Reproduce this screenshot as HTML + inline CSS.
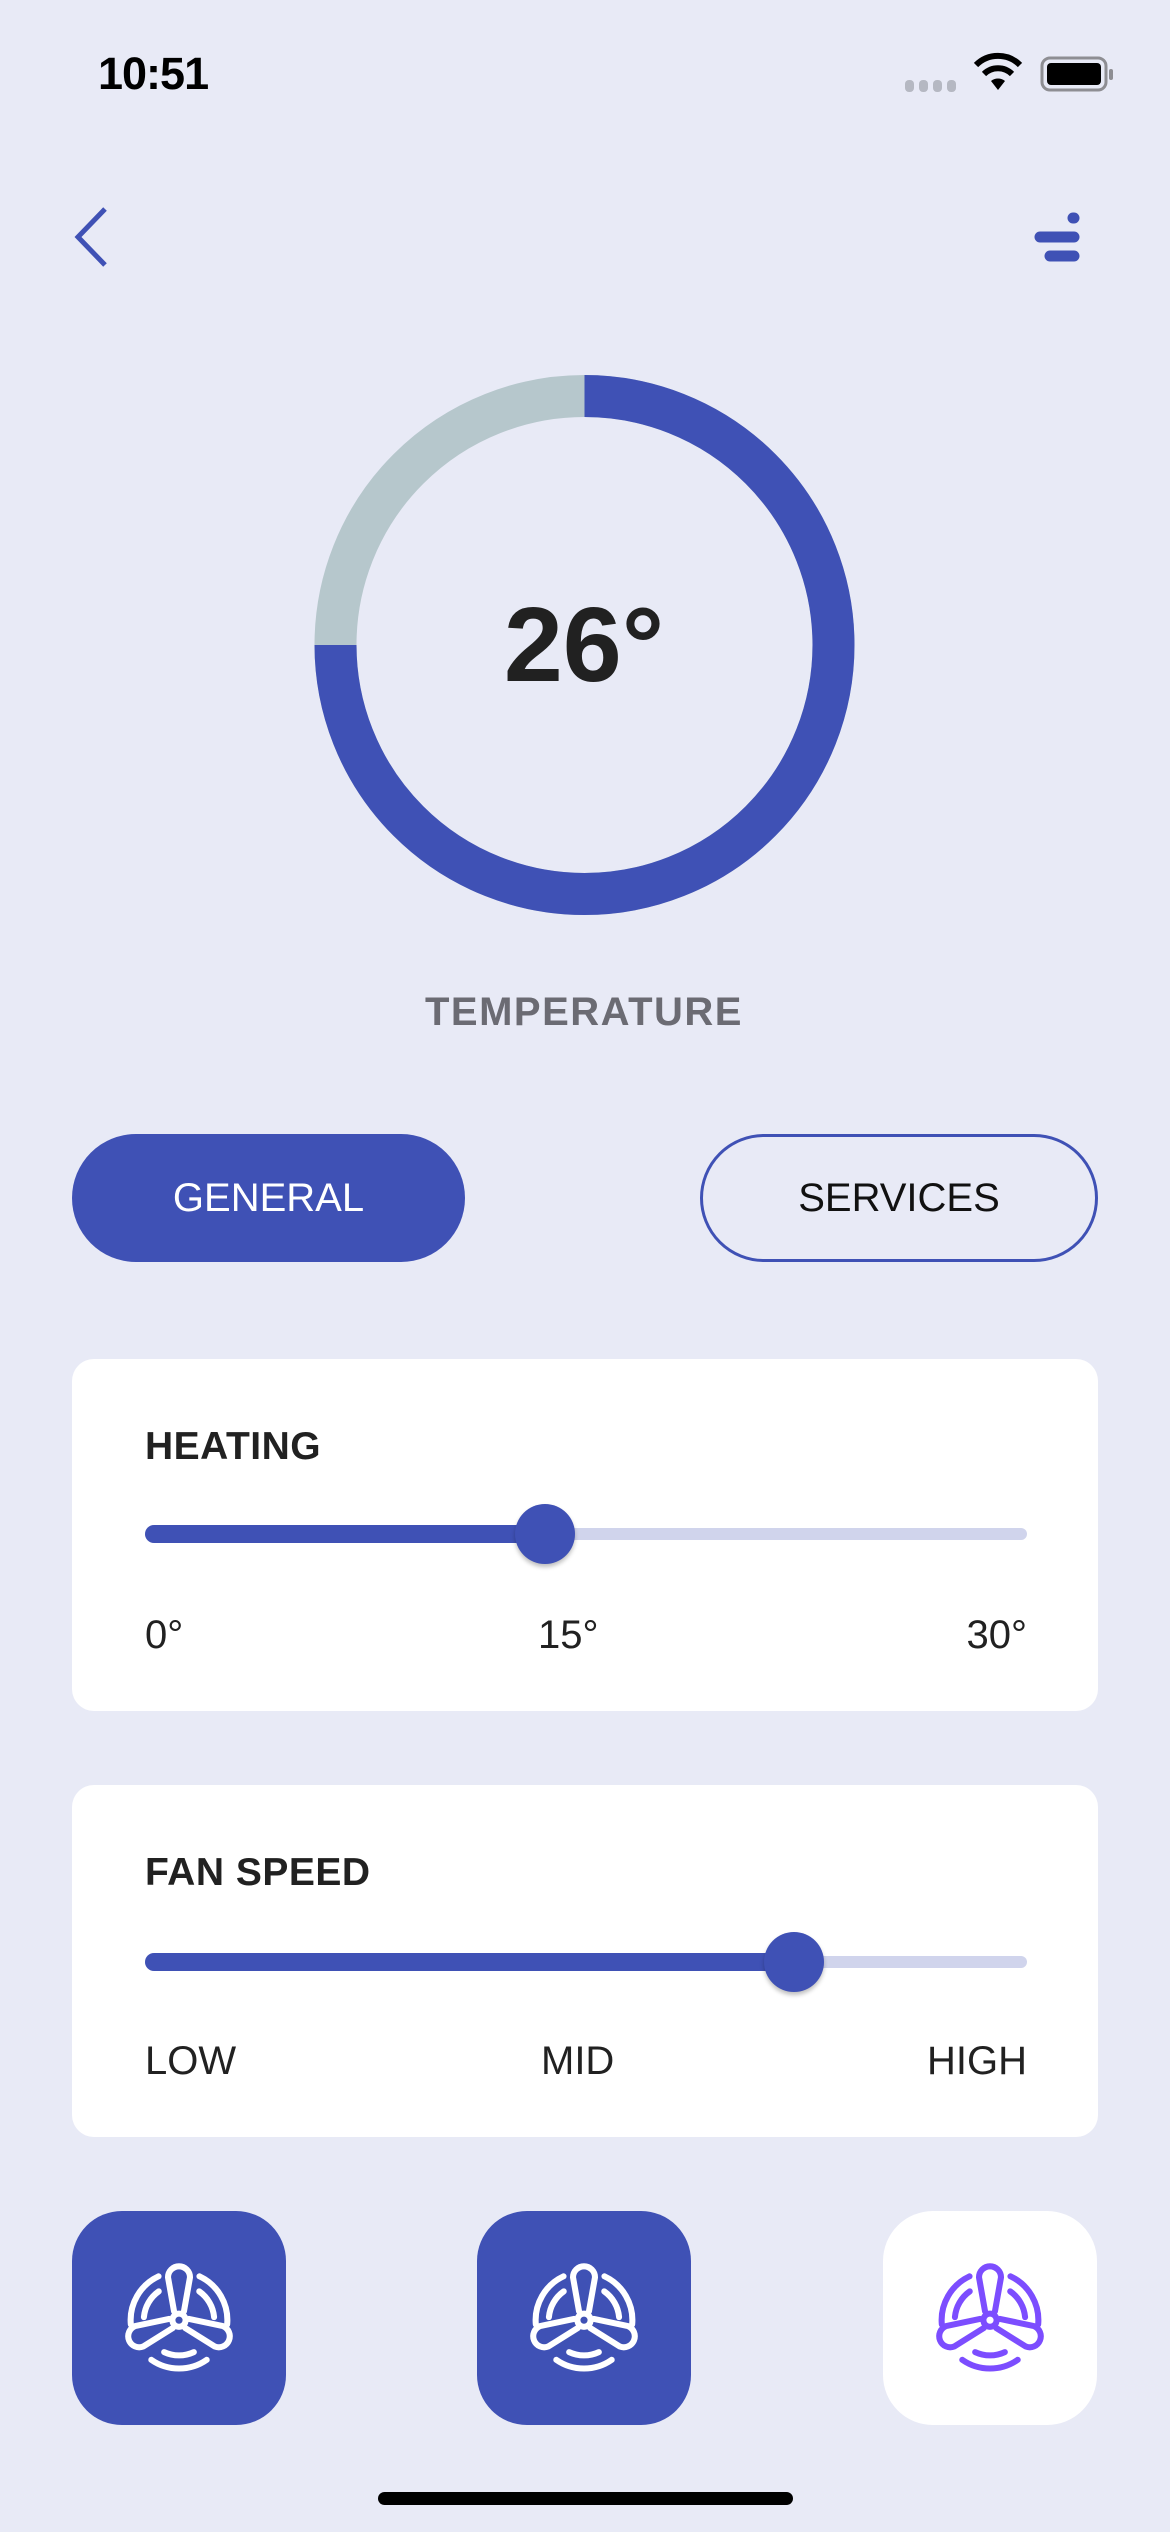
<!DOCTYPE html>
<html><head><meta charset="utf-8"><style>
*{margin:0;padding:0;box-sizing:border-box}
body{width:1170px;height:2532px;background:#e8eaf6;position:relative;overflow:hidden;font-family:"Liberation Sans",sans-serif;color:#212121}
.abs{position:absolute}
.time{left:98px;top:48px;font-size:45px;font-weight:bold;letter-spacing:-1px;color:#000}
.t26{left:334px;width:500px;top:585px;text-align:center;font-size:106px;font-weight:bold;color:#212121}
.temp{left:384px;width:400px;top:990px;text-align:center;font-size:40px;font-weight:bold;color:#6b6b73;letter-spacing:1.5px}
.btn{top:1134px;height:128px;border-radius:64px;font-size:40px;display:flex;align-items:center;justify-content:center}
.card{left:72px;width:1026px;height:352px;background:#fff;border-radius:22px}
.card h3{position:absolute;left:73px;top:66px;font-size:39px;font-weight:bold;letter-spacing:0.5px;color:#212121}
.track{position:absolute;left:73px;width:882px;height:12px;border-radius:6px;background:#d0d4ec}
.active{position:absolute;left:73px;height:18px;border-radius:9px;background:#3f51b5}
.thumb{position:absolute;width:60px;height:60px;border-radius:50%;background:#3f51b5;box-shadow:0 3px 4px rgba(0,0,0,.25)}
.lbl{position:absolute;top:254px;font-size:40px;color:#212121}
.fan{top:2211px;width:214px;height:214px;border-radius:50px;display:flex;align-items:center;justify-content:center}
</style></head><body>
<div class="abs time">10:51</div>
<svg class="abs" style="left:905px;top:80px" width="56" height="14"><g fill="#b5b8c2"><rect x="0" y="0" width="9" height="12" rx="4"/><rect x="14" y="0" width="9" height="12" rx="4"/><rect x="28" y="0" width="9" height="12" rx="4"/><rect x="42" y="0" width="9" height="12" rx="4"/></g></svg>
<svg class="abs" style="left:972px;top:52px" width="52" height="40" viewBox="0 0 52 40"><path d="M26 38 L19 29 A11 11 0 0 1 33 29 Z" fill="#000"/><path d="M12 22 A20 20 0 0 1 40 22" stroke="#000" stroke-width="6" fill="none"/><path d="M4 13 A31 31 0 0 1 48 13" stroke="#000" stroke-width="6" fill="none"/></svg>
<svg class="abs" style="left:1040px;top:56px" width="76" height="38"><rect x="2" y="2" width="64" height="32" rx="8" fill="none" stroke="#8e8e93" stroke-width="3"/><rect x="7" y="7" width="54" height="22" rx="4" fill="#000"/><rect x="69" y="13" width="4" height="11" rx="2" fill="#8e8e93"/></svg>
<svg class="abs" style="left:68px;top:205px" width="45" height="64"><path d="M37 4 L10 32 L37 60" stroke="#3f51b5" stroke-width="5" fill="none"/></svg>
<svg class="abs" style="left:1030px;top:210px" width="56" height="56"><g stroke="#3f51b5" stroke-width="11" stroke-linecap="round"><line x1="43" y1="8" x2="44" y2="8"/><line x1="10" y1="27" x2="44" y2="27"/><line x1="20" y1="46" x2="44" y2="46"/></g></svg>
<svg class="abs" style="left:300px;top:360px" width="570" height="570" viewBox="0 0 570 570">
<circle cx="284.5" cy="285" r="249" fill="none" stroke="#b6c7cc" stroke-width="42"/>
<path d="M284.5 36 A249 249 0 1 1 35.5 285" fill="none" stroke="#3f51b5" stroke-width="42"/>
</svg>
<div class="abs t26">26°</div>
<div class="abs temp">TEMPERATURE</div>
<div class="abs btn" style="left:72px;width:393px;background:#3f51b5;color:#fff">GENERAL</div>
<div class="abs btn" style="left:700px;width:398px;border:3px solid #3f51b5;color:#111">SERVICES</div>

<div class="abs card" style="top:1359px">
<h3>HEATING</h3>
<div class="track" style="top:169px"></div>
<div class="active" style="top:166px;width:400px"></div>
<div class="thumb" style="left:443px;top:145px"></div>
<div class="lbl" style="left:73px">0°</div>
<div class="lbl" style="left:466px">15°</div>
<div class="lbl" style="right:71px">30°</div>
</div>
<div class="abs card" style="top:1785px">
<h3>FAN SPEED</h3>
<div class="track" style="top:171px"></div>
<div class="active" style="top:168px;width:660px"></div>
<div class="thumb" style="left:692px;top:147px"></div>
<div class="lbl" style="left:73px">LOW</div>
<div class="lbl" style="left:469px">MID</div>
<div class="lbl" style="right:71px">HIGH</div>
</div>

<svg width="0" height="0" style="position:absolute"><defs><g id="fan" fill="none" stroke-width="5.5" stroke-linecap="round" stroke-linejoin="round">
<g id="blade"><path d="M45.5 44 L40 13 A10 10 0 0 1 60 13 L54.5 44"/></g>
<use href="#blade" transform="rotate(112 50 52)"/>
<use href="#blade" transform="rotate(248 50 52)"/>
<circle cx="50" cy="52" r="6"/>
<path d="M68.6 12.1 A44 44 0 0 1 93.8 55.8"/>
<path d="M68.4 25.8 A32 32 0 0 1 81.9 49.2"/>
<path d="M6.2 55.8 A44 44 0 0 1 31.4 12.1"/>
<path d="M18.1 49.2 A32 32 0 0 1 31.6 25.8"/>
<path d="M75.2 88 A44 44 0 0 1 24.8 88"/>
<path d="M63.5 81 A32 32 0 0 1 36.5 81"/>
</g></defs></svg>
<div class="abs fan" style="left:72px;background:#3f51b5"><svg width="110" height="110" viewBox="0 0 100 100" stroke="#fff"><use href="#fan"/></svg></div>
<div class="abs fan" style="left:477px;background:#3f51b5"><svg width="110" height="110" viewBox="0 0 100 100" stroke="#fff"><use href="#fan"/></svg></div>
<div class="abs fan" style="left:883px;background:#fff"><svg width="110" height="110" viewBox="0 0 100 100" stroke="#7c4dff"><use href="#fan"/></svg></div>
<div class="abs" style="left:378px;top:2492px;width:415px;height:13px;border-radius:7px;background:#000"></div>
</body></html>
